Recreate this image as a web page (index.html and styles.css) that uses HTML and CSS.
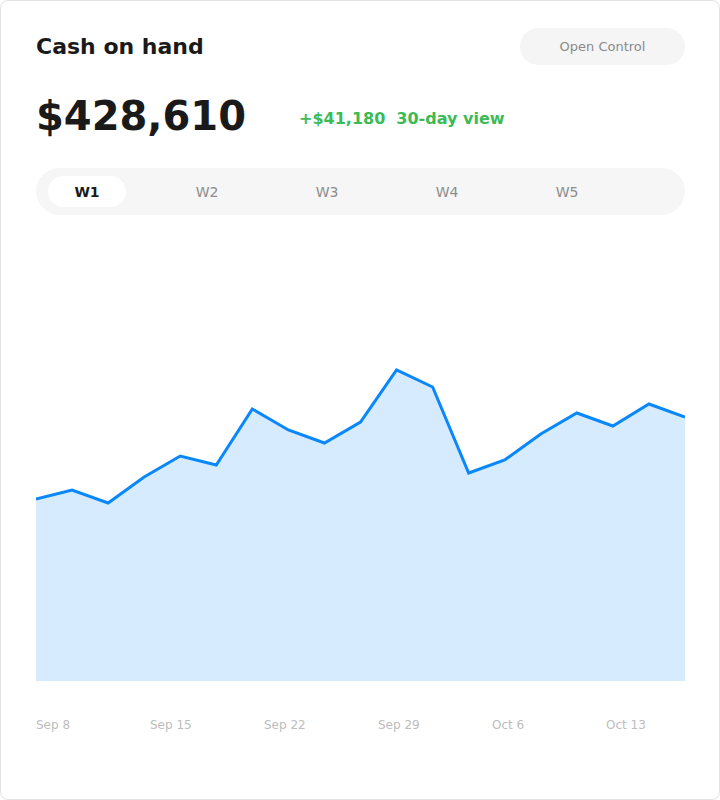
FILE: index.html
```html
<!DOCTYPE html>
<html lang="en">
<head>
    <meta charset="UTF-8">
    <meta name="viewport" content="width=device-width, initial-scale=1.0">
    <title>Cash on hand</title>
    <link rel="stylesheet" href="styles.css">
</head>
<body>
    <div class="card">
        <div class="card-header">
            <h1 class="title">Cash on hand</h1>
            <button class="control-button">Open Control</button>
        </div>

        <div class="summary">
            <span class="amount">$428,610</span>
            <span class="change">
                <span>+$41,180</span>
                <span>30-day view</span>
            </span>
        </div>

        <div class="tabs">
            <button class="tab active">W1</button>
            <button class="tab">W2</button>
            <button class="tab">W3</button>
            <button class="tab">W4</button>
            <button class="tab">W5</button>
        </div>

        <svg class="chart" width="649" height="446" viewBox="0 0 649 446">
            <polygon class="chart-area" points="0,446 0,264 36.06,255 72.11,268 108.17,242 144.22,221 180.28,230 216.33,174 252.39,195 288.44,208 324.5,187 360.56,135 396.61,152 432.67,238 468.72,225 504.78,199 540.83,178 576.89,191 612.94,169 649,182 649,446"/>
            <polyline class="chart-line" points="0,264 36.06,255 72.11,268 108.17,242 144.22,221 180.28,230 216.33,174 252.39,195 288.44,208 324.5,187 360.56,135 396.61,152 432.67,238 468.72,225 504.78,199 540.83,178 576.89,191 612.94,169 649,182"/>
        </svg>

        <div class="axis">
            <span>Sep 8</span>
            <span>Sep 15</span>
            <span>Sep 22</span>
            <span>Sep 29</span>
            <span>Oct 6</span>
            <span>Oct 13</span>
        </div>
    </div>
</body>
</html>
```

FILE: styles.css
```css
body {
    margin: 0;
    padding: 0;
    background-color: #ffffff;
    font-family: 'DejaVu Sans', 'Liberation Sans', sans-serif;
}

.card {
    box-sizing: border-box;
    width: 720px;
    height: 800px;
    border: 1px solid #e3e3e3;
    border-radius: 8px;
    padding: 27px 34px 0 35px;
    background-color: #ffffff;
}

.card-header {
    display: flex;
    justify-content: space-between;
    align-items: center;
}

.title {
    margin: 0;
    font-size: 22px;
    font-weight: bold;
    color: #1a1a1a;
}

.control-button {
    width: 165px;
    height: 37px;
    border: none;
    border-radius: 19px;
    background-color: #f5f5f5;
    color: #8a8a8a;
    font-family: inherit;
    font-size: 13px;
    padding: 0;
    cursor: pointer;
}

.summary {
    display: flex;
    align-items: center;
    gap: 53px;
    margin-top: 27px;
}

.amount {
    font-size: 40px;
    line-height: 48px;
    font-weight: bold;
    color: #1a1a1a;
}

.change {
    display: flex;
    gap: 11px;
    margin-top: 4px;
    font-size: 16px;
    font-weight: bold;
    color: #3cba54;
}

.tabs {
    display: flex;
    gap: 42px;
    margin-top: 28px;
    height: 47px;
    box-sizing: border-box;
    padding: 8px 12px;
    border-radius: 24px;
    background-color: #f6f6f6;
}

.tab {
    width: 78px;
    height: 31px;
    border: none;
    border-radius: 16px;
    background: transparent;
    color: #8c8c8c;
    font-family: inherit;
    font-size: 14px;
    padding: 0;
    cursor: pointer;
}

.tab.active {
    background-color: #ffffff;
    color: #1a1a1a;
    font-weight: bold;
}

.chart {
    display: block;
    margin-top: 20px;
}

.chart-area {
    fill: #d6ebfe;
}

.chart-line {
    fill: none;
    stroke: #0a88fb;
    stroke-width: 3;
}

.axis {
    display: flex;
    margin-top: 37px;
    font-size: 12px;
    line-height: 14px;
    color: #bdbdbd;
}

.axis span {
    flex-shrink: 0;
    width: 114px;
}
```
